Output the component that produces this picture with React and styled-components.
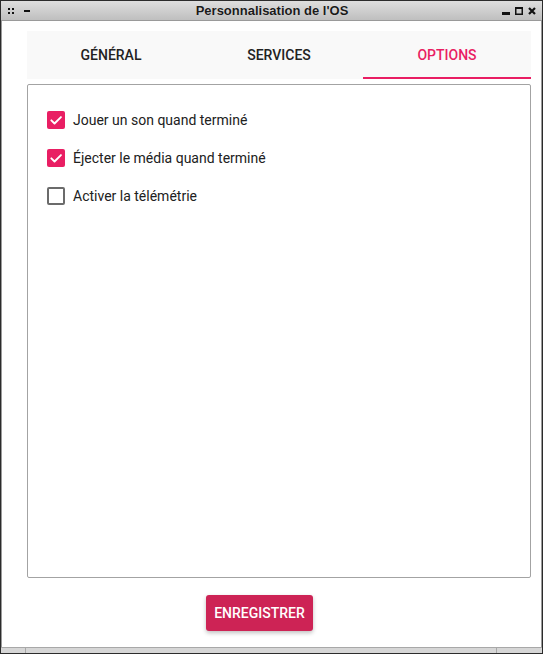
import styled, { createGlobalStyle } from "styled-components";

const PINK = "#e91e63";

const GlobalStyle = createGlobalStyle`
  html, body {
    margin: 0;
    padding: 0;
    background: #2b2b2b;
  }
  * {
    box-sizing: border-box;
  }
`;

const options = [
  { label: "Jouer un son quand terminé", checked: true },
  { label: "Éjecter le média quand terminé", checked: true },
  { label: "Activer la télémétrie", checked: false },
];

const tabs = ["GÉNÉRAL", "SERVICES", "OPTIONS"];

const App = () => {
  return (
    <Window>
      <GlobalStyle />
      <TitleBar>
        <TitleLeft>
          <Grip>
            <i />
            <i />
            <i />
            <i />
          </Grip>
          <Dash />
        </TitleLeft>
        <Title>Personnalisation de l'OS</Title>
        <TitleRight>
          <svg width="8" height="8" viewBox="0 0 8 8">
            <rect x="0" y="5" width="8" height="3" fill="#111" />
          </svg>
          <svg width="8" height="8" viewBox="0 0 8 8">
            <rect x="0.75" y="0.75" width="6.5" height="6.5" fill="none" stroke="#111" strokeWidth="1.5" />
            <rect x="0" y="0" width="8" height="2" fill="#111" />
          </svg>
          <svg width="8" height="8" viewBox="0 0 8 8">
            <path d="M1 1 L7 7 M7 1 L1 7" stroke="#111" strokeWidth="2.2" />
          </svg>
        </TitleRight>
      </TitleBar>

      <Body>
        <TabBar>
          {tabs.map((t, i) => (
            <Tab key={t} $active={i === 2}>
              {t}
            </Tab>
          ))}
        </TabBar>

        <Panel>
          {options.map((o) => (
            <Row key={o.label}>
              <Check $checked={o.checked}>
                {o.checked && (
                  <svg width="14" height="14" viewBox="0 0 24 24">
                    <path
                      d="M4 12.5 L9.5 18 L20.5 7"
                      fill="none"
                      stroke="#fff"
                      strokeWidth="3.2"
                      strokeLinecap="round"
                      strokeLinejoin="round"
                    />
                  </svg>
                )}
              </Check>
              <Label>{o.label}</Label>
            </Row>
          ))}
        </Panel>

        <Footer>
          <SaveButton>ENREGISTRER</SaveButton>
        </Footer>
      </Body>

      <BottomFrame>
        <span />
        <span />
        <span />
      </BottomFrame>
    </Window>
  );
};

export default App;

const Window = styled.div`
  width: 543px;
  height: 654px;
  display: flex;
  flex-direction: column;
  border: 1px solid #2b2b2b;
  background: #fff;
  font-family: Roboto, "Noto Sans", sans-serif;
`;

const TitleBar = styled.div`
  height: 20px;
  flex-shrink: 0;
  display: flex;
  align-items: center;
  justify-content: space-between;
  padding: 0 6px 0 7px;
  background: linear-gradient(#dedede, #bfbfbf);
  border-bottom: 1px solid #9a9a9a;
`;

const TitleLeft = styled.div`
  width: 60px;
  display: flex;
  align-items: center;
  gap: 10px;
`;

const Grip = styled.div`
  display: grid;
  grid-template-columns: 2px 2px;
  gap: 2px;

  i {
    width: 2px;
    height: 2px;
    background: #111;
  }
`;

const Dash = styled.div`
  width: 6px;
  height: 2px;
  background: #111;
`;

const Title = styled.div`
  font-family: "Liberation Sans", Arial, sans-serif;
  font-weight: bold;
  font-size: 13px;
  color: #1a1a1a;
  text-shadow: 0 0 1px rgba(255, 255, 255, 0.6);
`;

const TitleRight = styled.div`
  width: 60px;
  display: flex;
  justify-content: flex-end;
  align-items: center;
  gap: 5px;
`;

const Body = styled.div`
  flex: 1;
  display: flex;
  flex-direction: column;
  padding: 10px 10px 0 25px;
  border-left: 1px solid #9a9a9a;
  border-right: 1px solid #9a9a9a;
`;

const TabBar = styled.div`
  height: 48px;
  flex-shrink: 0;
  display: grid;
  grid-template-columns: repeat(3, 1fr);
  background: #f9f9f9;
`;

const Tab = styled.div`
  display: flex;
  align-items: center;
  justify-content: center;
  font-size: 14px;
  font-weight: 500;
  color: ${(p) => (p.$active ? PINK : "#222")};
  border-bottom: 2px solid ${(p) => (p.$active ? PINK : "transparent")};
  padding-top: 2px;
`;

const Panel = styled.div`
  margin-top: 5px;
  height: 494px;
  border: 1px solid #a3a3a3;
  border-radius: 2px;
  padding: 16px 19px;
  display: flex;
  flex-direction: column;
`;

const Row = styled.label`
  height: 38px;
  display: flex;
  align-items: center;
  gap: 8px;
`;

const Check = styled.span`
  width: 18px;
  height: 18px;
  border-radius: 2px;
  display: flex;
  align-items: center;
  justify-content: center;
  background: ${(p) => (p.$checked ? PINK : "#fff")};
  border: ${(p) => (p.$checked ? "none" : "2px solid #6b6b6b")};
`;

const Label = styled.span`
  font-size: 14px;
  color: #212121;
`;

const Footer = styled.div`
  flex: 1;
  display: flex;
  justify-content: center;
  padding-top: 17px;
  padding-right: 39px;
`;

const SaveButton = styled.button`
  height: 36px;
  padding: 0 8px;
  border: none;
  border-radius: 3px;
  background: #cd2355;
  color: #fff;
  font-family: Roboto, "Noto Sans", sans-serif;
  font-size: 14px;
  font-weight: 500;
  box-shadow: 0 2px 4px rgba(0, 0, 0, 0.25);
`;

const BottomFrame = styled.div`
  height: 6px;
  flex-shrink: 0;
  display: flex;
  background: #d6d6d6;
  border-top: 1px solid #a8a8a8;

  span {
    height: 100%;
    border-right: 1px solid #a8a8a8;
  }
  span:nth-child(1) {
    width: 25px;
  }
  span:nth-child(2) {
    flex: 1;
  }
  span:nth-child(3) {
    width: 45px;
    border-right: none;
  }
`;
